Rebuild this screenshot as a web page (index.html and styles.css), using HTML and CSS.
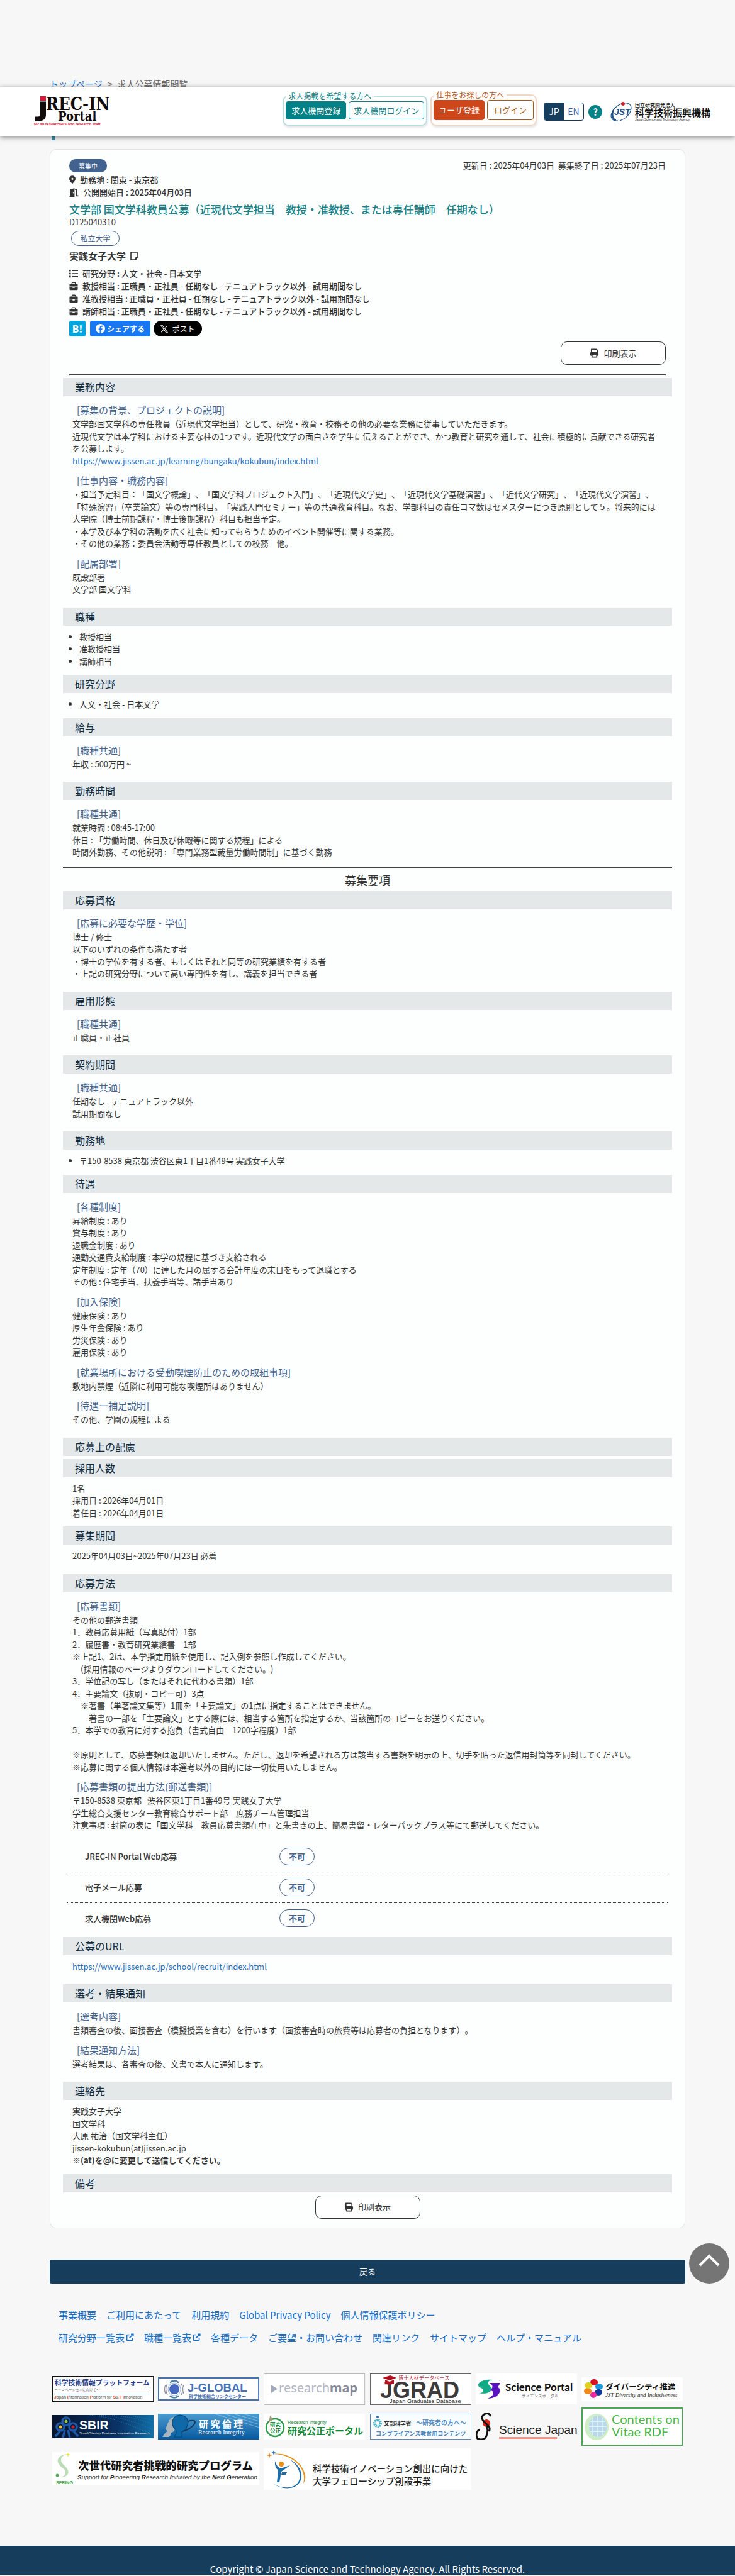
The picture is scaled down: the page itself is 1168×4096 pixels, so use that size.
FILE: index.html
```html
<!DOCTYPE html>
<html lang="ja">
<head>
<meta charset="utf-8">
<meta name="viewport" content="width=device-width, initial-scale=1">
<title>求人公募情報閲覧 : JREC-IN Portal</title>
<link rel="stylesheet" href="styles.css">
</head>
<body>
<svg class="defs" aria-hidden="true">
  <symbol id="i-print" viewBox="0 0 16 16"><path d="M3 1.500h8.500L13 3v4H3z" fill="none" stroke="currentColor" stroke-width="1.800" stroke-linejoin="round"/><rect x="1" y="6.500" width="14" height="6" rx="1.500" fill="currentColor"/><path d="M4 10.500h8v4H4z" fill="#fff" stroke="currentColor" stroke-width="1.800" stroke-linejoin="round"/></symbol>
  <symbol id="i-case" viewBox="0 0 16 16"><path d="M5 4V2.500A1 1 0 0 1 6 1.500h4a1 1 0 0 1 1 1V4" fill="none" stroke="currentColor" stroke-width="1.600"/><path d="M2 4h12a1.500 1.500 0 0 1 1.500 1.500V8.500H.5V5.500A1.500 1.500 0 0 1 2 4zM.5 9.500H6V11h4V9.500h5.500v4A1.500 1.500 0 0 1 14 15H2a1.500 1.500 0 0 1-1.500-1.500z" fill="currentColor"/></symbol>
  <symbol id="i-ext" viewBox="0 0 16 16"><path d="M7 3H3a1 1 0 0 0-1 1v9a1 1 0 0 0 1 1h9a1 1 0 0 0 1-1V9M10 1.500h4.500V6M14 2L7 9" fill="none" stroke="currentColor" stroke-width="2"/></symbol>
</svg>

<header class="site-header">
  <a href="#" class="brand" aria-label="JREC-IN Portal">
    <svg viewBox="0 0 128 52">
      <rect x="10" y="2" width="9" height="7" fill="#d31c3c"/>
      <path d="M10 10.500h9v21q0 10-12 10H1v-7h5q4 0 4-4.500z" fill="#120c0c"/>
      <text class="brand-rec" x="19" y="24">REC-IN</text>
      <text class="brand-portal" x="38" y="41">Portal</text>
      <text class="brand-tag" x="0" y="48">for all researchers and research staff</text>
    </svg>
  </a>
  <nav class="header-nav">
    <fieldset class="group group-org">
      <legend>求人掲載を希望する方へ</legend>
      <button type="button" class="btn btn-org-solid">求人機関登録</button>
      <button type="button" class="btn btn-org">求人機関ログイン</button>
    </fieldset>
    <fieldset class="group group-user">
      <legend>仕事をお探しの方へ</legend>
      <button type="button" class="btn btn-user-solid">ユーザ登録</button>
      <button type="button" class="btn btn-user">ログイン</button>
    </fieldset>
    <div class="lang"><a href="#" class="on">JP</a><a href="#">EN</a></div>
    <a href="#" class="help">?</a>
    <a href="#" class="jst" aria-label="科学技術振興機構">
      <svg viewBox="0 0 161 31">
        <path d="M12 30C4 31-1 26 2 18 6 8 18 0 27 2c7 2 7 9 4 15-4 7-10 11-16 13" fill="none" stroke="#1d4f88" stroke-width="1.200"/>
        <path d="M6 29C0 24 1 15 8 8 2 17 3 26 9 29z" fill="#1d4f88" stroke="#1d4f88"/>
        <circle cx="20" cy="3" r="3" fill="#cc2530"/>
        <text class="jst-mark" x="6" y="21">JST</text>
        <text class="jst-top" x="39" y="8">国立研究開発法人</text>
        <text class="jst-main" x="39" y="23">科学技術振興機構</text>
        <text class="jst-en" x="39" y="30">Japan Science and Technology Agency</text>
      </svg>
    </a>
  </nav>
</header>

<div class="top">
  <p class="crumbs"><a href="#">トップページ</a><span>&gt;</span>求人公募情報閲覧</p>
  <div class="title-mark"></div>
</div>

<main class="card">
  <div class="head">
    <div class="head-row">
      <span class="status">募集中</span>
      <span class="dates">更新日 : 2025年04月03日&nbsp; 募集終了日 : 2025年07月23日</span>
    </div>
    <p class="meta"><svg class="ic ic-pin" viewBox="0 0 12 16"><path d="M6 0a6 6 0 0 1 6 6c0 4-4.500 7.500-6 10C4.500 13.500 0 10 0 6a6 6 0 0 1 6-6zm0 4a2 2 0 1 0 0 4 2 2 0 0 0 0-4z" fill="currentColor" fill-rule="evenodd"/></svg>勤務地 : 関東 - 東京都</p>
    <p class="meta"><svg class="ic ic-door" viewBox="0 0 16 16"><path d="M0 14h1.500V2.500L9 0v16H0zM6.200 7.500v2h1.300v-2z" fill="currentColor" fill-rule="evenodd"/><path d="M10 2.500h2.500V14H16" fill="none" stroke="currentColor" stroke-width="2"/></svg>公開開始日 : 2025年04月03日</p>
    <h1>文学部 国文学科教員公募（近現代文学担当　教授・准教授、または専任講師　任期なし）</h1>
    <p class="code">D125040310</p>
    <p class="kind"><span>私立大学</span></p>
    <p class="org">実践女子大学 <svg class="ic-note" viewBox="0 0 12 14"><path d="M1 1h10v8.500L8.500 13H1z" fill="none" stroke="currentColor" stroke-width="1.600"/><path d="M11 9.500H8.500V13" fill="none" stroke="currentColor"/></svg></p>
    <p class="meta"><svg class="ic" viewBox="0 0 16 16"><path d="M0 1h3v3H0zM0 6.500h3v3H0zM0 12h3v3H0zM5 1.500h11v2H5zM5 7h11v2H5zM5 12.500h11v2H5z" fill="currentColor"/></svg>研究分野 : 人文・社会 - 日本文学</p>
    <p class="meta"><svg class="ic"><use href="#i-case"/></svg>教授相当 : 正職員・正社員 - 任期なし - テニュアトラック以外 - 試用期間なし</p>
    <p class="meta"><svg class="ic"><use href="#i-case"/></svg>准教授相当 : 正職員・正社員 - 任期なし - テニュアトラック以外 - 試用期間なし</p>
    <p class="meta"><svg class="ic"><use href="#i-case"/></svg>講師相当 : 正職員・正社員 - 任期なし - テニュアトラック以外 - 試用期間なし</p>
    <div class="share">
      <a href="#" class="hatena">B!</a>
      <a href="#" class="fb"><svg viewBox="0 0 16 16"><circle cx="8" cy="8" r="8" fill="#fff"/><path d="M7 16v-6H5V7.700h2V6c0-2 1.200-3.100 3-3.100l1.500.1v2h-1c-1 0-1.300.6-1.300 1.200v1.500h2.200L11 10H9.200v6z" fill="#1877f2"/></svg>シェアする</a>
      <a href="#" class="xpost"><svg viewBox="0 0 14 14"><path d="M1 1h3l9 12h-3zM12.500 1L8 6M6 8l-4.500 5" fill="none" stroke="#fff" stroke-width="1.200"/></svg>ポスト</a>
    </div>
    <div class="print-right"><button type="button" class="print"><svg><use href="#i-print"/></svg>印刷表示</button></div>
  </div>

  <section>
    <h2>業務内容</h2>
    <div class="body">
      <h3>[募集の背景、プロジェクトの説明]</h3>
      <p>文学部国文学科の専任教員（近現代文学担当）として、研究・教育・校務その他の必要な業務に従事していただきます。<br>近現代文学は本学科における主要な柱の1つです。近現代文学の面白さを学生に伝えることができ、かつ教育と研究を通して、社会に積極的に貢献できる研究者を公募します。<br><a href="#">https://www.jissen.ac.jp/learning/bungaku/kokubun/index.html</a></p>
      <h3>[仕事内容・職務内容]</h3>
      <p>・担当予定科目：「国文学概論」、「国文学科プロジェクト入門」、「近現代文学史」、「近現代文学基礎演習」、「近代文学研究」、「近現代文学演習」、「特殊演習」(卒業論文）等の専門科目。「実践入門セミナー」等の共通教育科目。なお、学部科目の責任コマ数はセメスターにつき原則として５。将来的には大学院（博士前期課程・博士後期課程）科目も担当予定。<br>・本学及び本学科の活動を広く社会に知ってもらうためのイベント開催等に関する業務。<br>・その他の業務：委員会活動等専任教員としての校務　他。</p>
      <h3>[配属部署]</h3>
      <p>既設部署<br>文学部 国文学科</p>
    </div>
  </section>
  <section>
    <h2>職種</h2>
    <ul class="body list"><li>教授相当</li><li>准教授相当</li><li>講師相当</li></ul>
  </section>
  <section>
    <h2>研究分野</h2>
    <ul class="body list"><li>人文・社会 - 日本文学</li></ul>
  </section>
  <section>
    <h2>給与</h2>
    <div class="body"><h3>[職種共通]</h3><p>年収 : 500万円 ~</p></div>
  </section>
  <section>
    <h2>勤務時間</h2>
    <div class="body last"><h3>[職種共通]</h3><p>就業時間 : 08:45-17:00<br>休日 : 「労働時間、休日及び休暇等に関する規程」による<br>時間外勤務、その他説明 : 「専門業務型裁量労働時間制」に基づく勤務</p></div>
  </section>

  <h2 class="divider">募集要項</h2>

  <section>
    <h2>応募資格</h2>
    <div class="body"><h3>[応募に必要な学歴・学位]</h3><p>博士 / 修士<br>以下のいずれの条件も満たす者<br>・博士の学位を有する者、もしくはそれと同等の研究業績を有する者<br>・上記の研究分野について高い専門性を有し、講義を担当できる者</p></div>
  </section>
  <section>
    <h2>雇用形態</h2>
    <div class="body"><h3>[職種共通]</h3><p>正職員・正社員</p></div>
  </section>
  <section>
    <h2>契約期間</h2>
    <div class="body"><h3>[職種共通]</h3><p>任期なし - テニュアトラック以外<br>試用期間なし</p></div>
  </section>
  <section>
    <h2>勤務地</h2>
    <ul class="body list"><li>〒150-8538 東京都 渋谷区東1丁目1番49号 実践女子大学</li></ul>
  </section>
  <section>
    <h2>待遇</h2>
    <div class="body">
      <h3>[各種制度]</h3>
      <p>昇給制度 : あり<br>賞与制度 : あり<br>退職金制度 : あり<br>通勤交通費支給制度 : 本学の規程に基づき支給される<br>定年制度 : 定年（70）に達した月の属する会計年度の末日をもって退職とする<br>その他 : 住宅手当、扶養手当等、諸手当あり</p>
      <h3>[加入保険]</h3>
      <p>健康保険 : あり<br>厚生年金保険 : あり<br>労災保険 : あり<br>雇用保険 : あり</p>
      <h3>[就業場所における受動喫煙防止のための取組事項]</h3>
      <p>敷地内禁煙（近隣に利用可能な喫煙所はありません）</p>
      <h3>[待遇ー補足説明]</h3>
      <p>その他、学園の規程による</p>
    </div>
  </section>
  <section class="empty"><h2>応募上の配慮</h2></section>
  <section>
    <h2>採用人数</h2>
    <div class="body plain"><p>1名<br>採用日 : 2026年04月01日<br>着任日 : 2026年04月01日</p></div>
  </section>
  <section>
    <h2>募集期間</h2>
    <div class="body plain roomy"><p>2025年04月03日~2025年07月23日 必着</p></div>
  </section>
  <section>
    <h2>応募方法</h2>
    <div class="body flush">
      <h3>[応募書類]</h3>
      <p>その他の郵送書類<br>1．教員応募用紙（写真貼付）1部<br>2．履歴書・教育研究業績書　1部<br>※上記1、2は、本学指定用紙を使用し、記入例を参照し作成してください。<br>　(採用情報のページよりダウンロードしてください。)<br>3．学位記の写し（またはそれに代わる書類）1部<br>4．主要論文（抜刷・コピー可）3点<br>　※著書（単著論文集等）1冊を「主要論文」の1点に指定することはできません。<br>　　著書の一部を「主要論文」とする際には、相当する箇所を指定するか、当該箇所のコピーをお送りください。<br>5．本学での教育に対する抱負（書式自由　1200字程度）1部<br><br>※原則として、応募書類は返却いたしません。ただし、返却を希望される方は該当する書類を明示の上、切手を貼った返信用封筒等を同封してください。<br>※応募に関する個人情報は本選考以外の目的には一切使用いたしません。</p>
      <h3>[応募書類の提出方法(郵送書類)]</h3>
      <p>〒150-8538 東京都 &nbsp; 渋谷区東1丁目1番49号 実践女子大学<br>学生総合支援センター教育総合サポート部　庶務チーム管理担当<br>注意事項 : 封筒の表に「国文学科　教員応募書類在中」と朱書きの上、簡易書留・レターパックプラス等にて郵送してください。</p>
    </div>
    <table class="methods">
      <tr><th scope="row">JREC-IN Portal Web応募</th><td><span>不可</span></td></tr>
      <tr><th scope="row">電子メール応募</th><td><span>不可</span></td></tr>
      <tr><th scope="row">求人機関Web応募</th><td><span>不可</span></td></tr>
    </table>
  </section>
  <section>
    <h2>公募のURL</h2>
    <div class="body plain roomy"><p><a href="#">https://www.jissen.ac.jp/school/recruit/index.html</a></p></div>
  </section>
  <section>
    <h2>選考・結果通知</h2>
    <div class="body">
      <h3>[選考内容]</h3>
      <p>書類審査の後、面接審査（模擬授業を含む）を行います（面接審査時の旅費等は応募者の負担となります）。</p>
      <h3>[結果通知方法]</h3>
      <p>選考結果は、各審査の後、文書で本人に通知します。</p>
    </div>
  </section>
  <section>
    <h2>連絡先</h2>
    <div class="body plain"><p>実践女子大学<br>国文学科<br>大原 祐治（国文学科主任）<br>jissen-kokubun(at)jissen.ac.jp<br><strong>※(at)を@に変更して送信してください。</strong></p></div>
  </section>
  <section class="empty"><h2>備考</h2></section>
  <div class="print-center"><button type="button" class="print"><svg><use href="#i-print"/></svg>印刷表示</button></div>
</main>

<div class="back-area">
  <button type="button" class="back">戻る</button>
  <a href="#" class="to-top" aria-label="ページの先頭へ"><svg viewBox="0 0 64 64"><path d="M17 35L32 20l15 15" fill="none" stroke="#fff" stroke-width="4"/></svg></a>
</div>

<nav class="foot-links">
  <ul><li><a href="#">事業概要</a></li><li><a href="#">ご利用にあたって</a></li><li><a href="#">利用規約</a></li><li><a href="#">Global Privacy Policy</a></li><li><a href="#">個人情報保護ポリシー</a></li></ul>
  <ul><li><a href="#">研究分野一覧表<svg><use href="#i-ext"/></svg></a></li><li><a href="#">職種一覧表<svg><use href="#i-ext"/></svg></a></li><li><a href="#">各種データ</a></li><li><a href="#">ご要望・お問い合わせ</a></li><li><a href="#">関連リンク</a></li><li><a href="#">サイトマップ</a></li><li><a href="#">ヘルプ・マニュアル</a></li></ul>
</nav>

<div class="banners">
  <a href="#"><svg viewBox="0 0 161 41">
    <rect x=".5" y=".5" width="160" height="40" fill="#fff" stroke="#111"/>
    <text x="4" y="15" class="g b" font-size="10.800" fill="#2b3e8c">科学技術情報プラットフォーム</text>
    <text x="4" y="24" class="g" font-size="5.500" fill="#667">～イノベーションに向けて～</text>
    <path d="M3 28.500h153" stroke="#3b5fa5"/>
    <text x="3" y="36" class="s" font-size="6.800" fill="#555"><tspan class="r">J</tspan>apan <tspan class="r">I</tspan>nformation <tspan class="r">P</tspan>latform for <tspan class="r">S</tspan>&amp;<tspan class="r">T</tspan> <tspan class="r">I</tspan>nnovation</text>
  </svg></a>
  <a href="#"><svg viewBox="0 0 161 37">
    <rect x="1" y="1" width="159" height="35" fill="#fff" stroke="#4472b0" stroke-width="2"/>
    <circle cx="26" cy="19" r="8" fill="#4468c0"/><circle cx="26" cy="19" r="10" fill="none" stroke="#9fb8e6"/>
    <path d="M19 8.500q7-6 14 0M19 29.500q7 6 14 0" fill="none" stroke="#4b84a8" stroke-width="2.500"/>
    <path d="M15 10q-5 9 0 18M12 12q-3 7 0 14M37 10q5 9 0 18M40 12q3 7 0 14" fill="none" stroke="#8b9299" stroke-width="1.300"/>
    <text x="47" y="23" class="s b" font-size="18.500" fill="#4373bb">J-GLOBAL</text>
    <text x="49" y="33" class="g b" font-size="7" fill="#4373bb">科学技術総合リンクセンター</text>
  </svg></a>
  <a href="#"><svg viewBox="0 0 161 50">
    <rect x=".5" y=".5" width="160" height="49" fill="#fff" stroke="#b8bcbf"/>
    <path d="M12 18l10 6.500L12 31z" fill="#a2a9bb"/>
    <text x="24" y="30" class="n" font-size="20" fill="#b2b6c6">research<tspan font-weight="700" fill="#878b99">map</tspan></text>
  </svg></a>
  <a href="#"><svg viewBox="0 0 161 50">
    <rect x=".5" y=".5" width="160" height="49" fill="#fff" stroke="#666"/>
    <text x="16" y="39" class="s b" font-size="36" fill="#3c3a3a">JGRAD</text>
    <path d="M20 7l12-4 10 4-11 4zM24 10l7 3 7-3v6q-7 3-14 0z" fill="#b0101c"/>
    <text x="45" y="10" class="g" font-size="8.200" fill="#b8324a">博士人材データベース</text>
    <text x="31" y="47" class="s" font-size="9.300" fill="#333">Japan Graduates Database</text>
  </svg></a>
  <a href="#"><svg viewBox="0 0 161 49">
    <rect width="161" height="49" fill="#fff"/>
    <path d="M26 10C15 9 4 13 4 18c0 6 8 4 8 9 0 3-3 4-7 4 9 2 18 0 20-5 2-5-6-7-5-11 0-3 2-4 6-5z" fill="#13aa86"/>
    <path d="M22 15h17l-4 7c7 2 4 17-16 18 6-3 9-6 9-9 0-3-3-4-6-4 5-3 7-8 0-12z" fill="#5a13bd"/>
    <text x="47" y="28" class="d b" font-size="17" fill="#111">Science Portal</text>
    <text x="73" y="38" class="g" font-size="6.500" fill="#666">サイエンスポータル</text>
  </svg></a>
  <a href="#"><svg viewBox="0 0 161 38">
    <rect width="161" height="38" fill="#fff"/>
    <ellipse cx="20" cy="8" rx="6" ry="5" fill="#d81324"/><ellipse cx="28" cy="15" rx="6" ry="5" fill="#1a98dc"/><ellipse cx="27" cy="24" rx="6" ry="5" fill="#1238a0"/><ellipse cx="19" cy="28" rx="5" ry="5" fill="#e52a9b"/><ellipse cx="10" cy="22" rx="6" ry="5" fill="#ee8818"/><ellipse cx="11" cy="13" rx="6" ry="5" fill="#dfd022"/><circle cx="19" cy="18" r="3" fill="#fff"/>
    <text x="38" y="20" class="g b" font-size="12.500" fill="#111">ダイバーシティ推進</text>
    <text x="38" y="31" class="t i" font-size="9" fill="#222">JST Diversity and Inclusiveness</text>
  </svg></a>

  <a href="#"><svg viewBox="0 0 161 37">
    <defs><linearGradient id="sb"><stop offset="0" stop-color="#06142e"/><stop offset=".65" stop-color="#0a3366"/><stop offset="1" stop-color="#1270a8"/></linearGradient></defs>
    <rect width="161" height="37" fill="url(#sb)"/>
    <path d="M60 0q45 4 101 33M75 0q45 4 86 24M95 0q35 3 66 15M120 0q20 3 41 9" fill="none" stroke="#2185bd" stroke-dasharray="1 2"/>
    <g fill="none" stroke="#2059a6" stroke-width="3.500"><circle cx="22" cy="10" r="6"/><circle cx="13" cy="19" r="6"/><circle cx="33" cy="19" r="6"/><path d="M12 26L5 34M20 24l-3 12M25 24l3 12M34 26l7 8"/></g>
    <circle cx="22" cy="10" r="2.500" fill="#8bc34a"/><circle cx="13" cy="19" r="2.500" fill="#f1c232"/><circle cx="33" cy="19" r="2.500" fill="#c1272d"/>
    <text x="43" y="23" class="s b" font-size="19.500" fill="#fff">SBIR</text>
    <text x="43" y="31" class="s" font-size="5.700" fill="#e4ecf5">Small/Startup Business Innovation Research</text>
  </svg></a>
  <a href="#"><svg viewBox="0 0 161 41">
    <defs><linearGradient id="ri" x2="0" y2="1"><stop offset="0" stop-color="#4a9bd0"/><stop offset="1" stop-color="#07589d"/></linearGradient></defs>
    <rect width="161" height="41" fill="url(#ri)"/>
    <path d="M90 0l71 22M105 0l56 17M120 0l41 12M135 0l26 7" stroke="#a4d2ec" stroke-opacity=".6"/>
    <path d="M7 37q4-7 8-9l-3-4 4-10q4-10 14-10-8 9-4 17 2 8-5 9 0 5-4 7z" fill="#aab6bf"/>
    <path d="M23 15q0-12 12-13 12 1 13 12l-3 9q-3 6-7 5v9H26q5-7 2-12-5-3-5-10z" fill="#0f69a9" stroke="#044479"/>
    <path d="M47 12q15-4 11 4-5 8-19 12" fill="none" stroke="#123d62" stroke-width="2"/>
    <text x="65" y="22" class="m b" font-size="15" fill="#fff">研 究 倫 理</text>
    <text x="64" y="33" class="t" font-size="10" fill="#fff">Research Integrity</text>
  </svg></a>
  <a href="#"><svg viewBox="0 0 161 41">
    <rect width="161" height="41" fill="#fff"/>
    <circle cx="18" cy="22" r="14" fill="#fff" stroke="#2c9a4b" stroke-width="2.500"/><path d="M10 3l5 5-7 6z" fill="#a59a7c"/>
    <text x="10" y="20" class="g b" font-size="8.500" fill="#128837">研究</text><text x="10" y="30" class="g b" font-size="8.500" fill="#128837">公正</text>
    <text x="38" y="16" class="s" font-size="7.600" fill="#128837">Research Integrity</text>
    <text x="38" y="33" class="g b" font-size="15" fill="#128837">研究公正ポータル</text>
  </svg></a>
  <a href="#"><svg viewBox="0 0 161 41">
    <rect x=".5" y=".5" width="160" height="40" fill="#fafdff" stroke="#5a83b4"/>
    <circle cx="12" cy="15" r="5" fill="none" stroke="#49b2cb" stroke-width="4" stroke-dasharray="2 1"/><circle cx="12" cy="5" r="2" fill="#3466a8"/>
    <text x="22" y="19" class="m b" font-size="8.700" fill="#333">文部科学省</text>
    <text x="73" y="18" class="g b" font-size="10" fill="#5590cc">～研究者の方へ～</text>
    <text x="9" y="35" class="g b" font-size="9" fill="#4684c4">コンプライアンス教育用コンテンツ</text>
  </svg></a>
  <a href="#"><svg viewBox="0 0 161 43">
    <circle cx="17" cy="16" r="6" fill="#db2419"/>
    <path d="M24 5q-3-6-9-4-7 3-4 10 2 3 8 8 5 5 2 10M17 21q3 4 1 12-2 9-9 9-8 0-8-7 0-6 5-9" fill="none" stroke="#111" stroke-width="3"/>
    <text x="37" y="33" class="o" font-size="19" fill="#1b1b1b">Science Japan</text>
    <path d="M37 39.500h92" stroke="#cf3a2c" stroke-width="2"/>
  </svg></a>
  <a href="#"><svg viewBox="0 0 161 61">
    <rect x="1" y="1" width="159" height="59" fill="#fff" stroke="#4ca653" stroke-width="2"/>
    <ellipse cx="24" cy="31" rx="19" ry="21" fill="#cdeec6"/><ellipse cx="26" cy="30" rx="14" ry="17" fill="#bcd5ea"/>
    <path d="M26 13v34M18 16v28M34 16v28M12 30h28M14 22h24M14 38h24" stroke="#dff" stroke-width="1.300"/>
    <text x="48" y="26" class="l" font-size="20" fill="#49b548">Contents on</text>
    <text x="48" y="46" class="l" font-size="20" fill="#49b548">Vitae RDF</text>
  </svg></a>

  <a href="#" class="wide"><svg viewBox="0 0 329 53">
    <rect width="329" height="53" fill="#fff"/>
    <path d="M24 3C12 4 6 11 10 18c4 8 12 8 11 15 0 4-4 6-8 7 10 0 14-5 12-11-2-7-12-10-11-17 0-5 5-8 10-9z" fill="#b9dbb5"/>
    <circle cx="8" cy="37" r="2.500" fill="#58ad5c"/><path d="M25 0l1 3 3 1-3 1-1 3-1-3-3-1 3-1z" fill="#f3e641"/>
    <text x="6" y="51" class="o b" font-size="7" fill="#3f9f45">SPRING</text>
    <text x="41" y="28" class="g h" font-size="17.400" fill="#111">次世代研究者挑戦的研究プログラム</text>
    <text x="40" y="43" class="s i" font-size="9.900" fill="#222"><tspan class="b">S</tspan>upport for <tspan class="b">P</tspan>ioneering <tspan class="b">R</tspan>esearch <tspan class="b">I</tspan>nitiated by the <tspan class="b">N</tspan>ext <tspan class="b">G</tspan>eneration</text>
  </svg></a>
  <a href="#" class="wide"><svg viewBox="0 0 329 66">
    <rect width="329" height="66" fill="#fff"/>
    <path d="M14 9C38 6 60 20 66 42q1 8-3 14 2-9 0-16C58 21 37 9 14 9z" fill="#e4951e"/>
    <path d="M42 18c22 16 20 42-2 44-9 1-17-1-25-6 18 13 46 9 45-14-1-10-8-19-18-24z" fill="#1b6ea9"/>
    <circle cx="28" cy="25" r="4" fill="#e9921c"/>
    <path d="M18 20q2 9 9 12l15-5-14 10-3 17h-4l2-19q-6-5-5-15zM29 38h8l-2 4h-7z" fill="#1b6ea9"/>
    <path d="M9 6l1 4 4 1-4 1-1 4-1-4-4-1 4-1z" fill="#e08428"/><path d="M16 3l1 3 3 1-3 1-1 3-1-3-3-1 3-1z" fill="#2a75b8"/>
    <text x="78" y="38" class="g f" font-size="14.500" fill="#222">科学技術イノベーション創出に向けた</text>
    <text x="78" y="58" class="g f" font-size="14.500" fill="#222">大学フェローシップ創設事業</text>
  </svg></a>
</div>

<footer class="site-footer">Copyright © Japan Science and Technology Agency. All Rights Reserved.</footer>
</body>
</html>
```
FILE: styles.css
```css
* { box-sizing: border-box; }
body {
  margin: 0;
  position: relative;
  background: #f7f7f7;
  color: #333;
  font: 13px/1.5 "Noto Sans CJK JP", "Noto Sans", sans-serif;
  text-spacing-trim: space-all;
}
p, h1, h2, h3, ul { margin: 0; padding: 0; font-weight: 400; }
a { color: #1a6fc4; text-decoration: none; }
button { font: inherit; cursor: pointer; }
svg { display: block; }
.defs { position: absolute; width: 0; height: 0; }

/* header bar floats over the page */
.site-header {
  position: absolute;
  top: 138px;
  left: 0;
  right: 0;
  height: 78px;
  display: flex;
  justify-content: space-between;
  align-items: flex-start;
  padding: 13px 37px 0 54px;
  background: #fff;
  box-shadow: 0 2px 8px rgba(0, 0, 0, .5);
}
.brand svg { width: 128px; height: 52px; }
.brand-rec { font: 700 27px "DejaVu Serif Condensed", "DejaVu Serif", serif; fill: #120c0c; }
.brand-portal { font: 700 20px "DejaVu Serif Condensed", "DejaVu Serif", serif; fill: #120c0c; }
.brand-tag { font: 700 6px "Liberation Sans", sans-serif; fill: #d31c3c; }
.header-nav { display: flex; align-items: flex-start; }
.group {
  display: flex;
  gap: 4px;
  margin: 0 5px 0 0;
  padding: 0 3px 8px;
  min-width: 0;
  border: 2px solid #b5dcde;
  border-radius: 9px;
  box-shadow: 1px 3px 3px rgba(0, 0, 0, .1);
}
.group legend { margin-left: 1px; padding: 0 4px 0 3px; font-size: 12px; line-height: 16px; }
.group-org { margin-top: -6px; }
.group-org legend { color: #0b8186; }
.group-user { margin: -8px 11px 0 0; padding-bottom: 7px; border-color: #f2d6c6; }
.group-user legend { color: #b3541c; }
.btn { height: 29px; padding: 0 7px; border: 1px solid; border-radius: 4px; background: #fff; line-height: 26px; white-space: nowrap; }
.btn-org { color: #0b8186; }
.btn-org-solid { padding: 0 8px; color: #fff; background: #028287; border-color: #028287; }
.group-user .btn { height: 32px; }
.btn-user { padding: 0 10px; color: #a85a14; }
.btn-user-solid { color: #fff; background: #cd471b; border-color: #cd471b; }
.lang { display: flex; width: 64px; margin-top: 12px; border: 1px solid #163d5c; border-radius: 4px; overflow: hidden; }
.lang a { flex: 1; text-align: center; font-size: 14px; line-height: 27px; color: #3a5fa8; }
.lang .on { background: #163d5c; color: #fff; }
.help { width: 22px; height: 22px; margin: 16px 13px 0 7px; border-radius: 50%; background: #028287; color: #fff; font-weight: 700; font-size: 15px; line-height: 21px; text-align: center; }
.jst { margin-top: 11px; }
.jst svg { width: 161px; height: 31px; }
.jst-mark { font: italic 700 14px "Liberation Sans", sans-serif; fill: #1d4f88; }
.jst-top { font: 500 8px "Noto Sans CJK JP", sans-serif; fill: #111; }
.jst-main { font: 700 15px "Noto Sans CJK JP", sans-serif; fill: #111; }
.jst-en { font: 5px "Liberation Sans", sans-serif; fill: #333; }

.top { margin: 0 79px; padding-top: 122px; height: 237px; }
.crumbs { font-size: 14px; line-height: 22px; color: #666; }
.crumbs span { margin: 0 8px; }
.title-mark { width: 6px; height: 70px; margin: 9px 0 0 3px; background: #3f8ba3; }

.card {
  margin: 0 79px;
  padding: 15px 20px 14px;
  background: #fdfefe;
  border: 1px solid #e2e2e2;
  border-radius: 10px;
}
.head { margin: 0 10px 5px; border-bottom: 1px solid #444; padding-bottom: 15px; }
.head-row { display: flex; justify-content: space-between; margin-bottom: 2px; }
.status { width: 60px; height: 21px; border-radius: 10px; background: #42628f; color: #fff; font-size: 10px; line-height: 21px; text-align: center; }
.meta { display: flex; align-items: center; gap: 7px; line-height: 20px; font-weight: 500; }
.ic { width: 14px; height: 14px; }
.ic-pin { width: 10px; }
.ic-door { width: 15px; }
h1 { margin-top: 6px; font-size: 17px; line-height: 22px; font-weight: 500; color: #148187; }
.code { line-height: 18px; }
.kind { margin: 5px 0 5px 3px; }
.kind span { display: block; width: 77px; border: 1px solid #42628f; border-radius: 12px; text-align: center; font-size: 12px; line-height: 22px; color: #42628f; }
.org { display: flex; align-items: center; gap: 7px; margin-bottom: 7px; font-size: 15px; line-height: 22px; font-weight: 700; }
.ic-note { width: 12px; height: 14px; }
.share { display: flex; gap: 5px; margin: 5px 0 8px; line-height: 25px; height: 25px; }
.share a { color: #fff; display: flex; align-items: center; border-radius: 3px; }
.hatena { width: 26px; margin-right: 2px; justify-content: center; background: #00a4de; font-weight: 900; font-size: 15px; }
.fb { gap: 3px; width: 96px; justify-content: center; background: #1877f2; font-weight: 700; font-size: 12px; }
.fb svg { width: 15px; height: 15px; }
.share .xpost { gap: 6px; width: 77px; justify-content: center; background: #000; border-radius: 13px; font-size: 12px; }
.xpost svg { width: 12px; height: 12px; }
.print { display: flex; align-items: center; justify-content: center; gap: 7px; width: 167px; height: 37px; border: 1px solid #333; border-radius: 10px; background: #fff; color: #333; }
.print svg { width: 15px; height: 15px; }
.print-right { display: flex; justify-content: flex-end; }
.print-center { display: flex; justify-content: center; }

section h2 { padding-left: 19px; background: #e4e8e8; color: #0d2c44; font-size: 16px; line-height: 29px; }
.body { padding: 0 20px 19px 15px; }
.body h3 { padding: 11px 0 1px 7px; font-size: 15px; line-height: 22px; color: #42628f; }
.list { padding: 8px 20px 12px 26px; }
.plain { padding: 8px 20px 12px 15px; }
.roomy { padding-bottom: 19px; }
.last { padding-bottom: 14px; }
.flush { padding-bottom: 0; }
.empty { padding-bottom: 5px; }
.divider { border-top: 1px solid #444; padding: 6px 0 5px; font-size: 18px; line-height: 26px; text-align: center; }
.methods { width: calc(100% - 14px); margin: 16px 7px 5px; border-collapse: collapse; }
.methods tr + tr { border-top: 1px dotted #333; }
.methods th { width: 337px; height: 49px; padding: 0 0 0 28px; text-align: left; font-weight: 500; }
.methods td { padding: 0; }
.methods span { display: block; width: 56px; border: 1px solid #42628f; border-radius: 14px; text-align: center; font-weight: 700; line-height: 26px; color: #42628f; }

.back-area { position: relative; padding: 50px 79px 0; }
.back { display: block; width: 100%; height: 38px; border: 0; border-radius: 3px; background: #163d5c; color: #fff; }
.to-top { position: absolute; right: 9px; bottom: 0; width: 64px; height: 64px; border-radius: 50%; background: #757575; }

.foot-links { margin: 39px 93px 0; font-size: 15px; line-height: 22px; }
.foot-links ul { display: flex; flex-wrap: wrap; gap: 0 16px; list-style: none; margin-bottom: 14px; }
.foot-links a { display: flex; align-items: center; gap: 2px; color: #1370d0; }
.foot-links svg { width: 13px; height: 13px; }

.banners { display: grid; grid-template-columns: repeat(6, 1fr); gap: 4px 7px; align-items: center; margin: 46px 83px 89px; }
.banners svg { width: 100%; }
.wide { grid-column: span 2; }
.g { font-family: "Noto Sans CJK JP", sans-serif; }
.s { font-family: "Liberation Sans", sans-serif; }
.n { font-family: "Noto Sans", sans-serif; }
.d { font-family: Lato, sans-serif; }
.l { font-family: Lato, sans-serif; }
.o { font-family: "Liberation Sans Narrow", "Liberation Sans", sans-serif; }
.t { font-family: "Liberation Serif", serif; }
.m { font-family: "Noto Sans CJK JP", serif; }
.b { font-weight: 700; }
.h { font-weight: 900; }
.f { font-weight: 500; }
.i { font-style: italic; }
.r { font-weight: 700; fill: #dc4322; }

.site-footer { height: 46px; overflow: hidden; padding-top: 29px; background: #163d5c; color: #fff; font-size: 15px; line-height: 15px; text-align: center; }
```
